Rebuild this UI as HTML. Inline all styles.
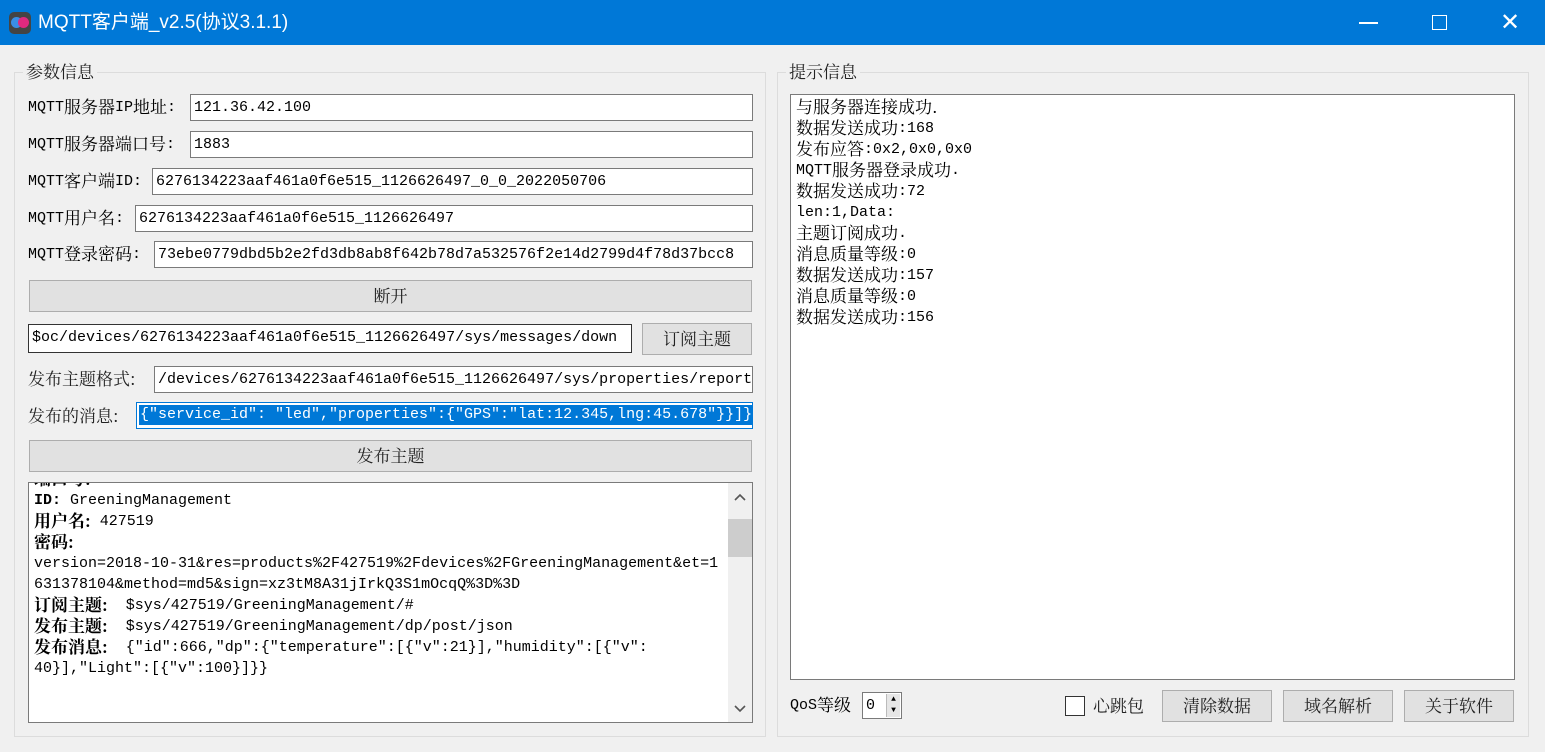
<!DOCTYPE html><html><head><meta charset="utf-8"><style>
*{box-sizing:border-box;margin:0;padding:0}
body{width:1545px;height:752px;background:#f0f0f0;position:relative;overflow:hidden;font-family:"Liberation Mono","Noto Serif CJK SC",monospace;font-size:15px;color:#000}
.a{position:absolute;white-space:pre;line-height:20px}
.c{font-family:"Noto Serif CJK SC","Noto Sans CJK SC",serif;font-size:17px;line-height:12px;position:relative;top:2px}
.cj{font-family:"Noto Serif CJK SC","Noto Sans CJK SC",serif;font-size:17px;line-height:20px}
.in{position:absolute;background:#fff;border:1px solid #7a7a7a;height:27px;padding:3px 0 0 3px;white-space:pre;overflow:hidden;line-height:20px}
.bt{position:absolute;background:#e1e1e1;border:1px solid #adadad;text-align:center;line-height:28px;font-family:"Noto Serif CJK SC",serif;font-size:17px;color:#222}
.gb{position:absolute;border:1px solid #dcdcdc}
.gt{position:absolute;background:#f0f0f0;padding:0 3px;font-family:"Noto Serif CJK SC",serif;font-size:17px;color:#222;line-height:20px}
</style></head><body>
<div style="position:absolute;left:0;top:0;width:1545px;height:45px;background:#0078d7"></div>
<div style="position:absolute;left:9px;top:12px;width:22px;height:22px;border-radius:5px;background:#444"></div>
<div style="position:absolute;left:11px;top:17px;width:11px;height:11px;border-radius:50%;background:#3a8ee6"></div>
<div style="position:absolute;left:18px;top:17px;width:11px;height:11px;border-radius:50%;background:#e0297f"></div>
<div class="a" style="left:38px;top:11px;color:#fff;font-family:'Liberation Sans','Noto Sans CJK SC',sans-serif;font-size:19px;line-height:24px">MQTT客户端_v2.5(协议3.1.1)</div>
<div style="position:absolute;left:1359px;top:22px;width:19px;height:1.5px;background:#fff"></div>
<div style="position:absolute;left:1432px;top:15px;width:15px;height:15px;border:1.5px solid #fff"></div>
<div class="a" style="left:1500px;top:9px;color:#fff;font-family:'Liberation Sans';font-size:24px;line-height:28px">✕</div>

<div class="gb" style="left:14px;top:72px;width:752px;height:665px"></div>
<div class="gt" style="left:23px;top:61px">参数信息</div>
<div class="gb" style="left:777px;top:72px;width:752px;height:665px"></div>
<div class="gt" style="left:786px;top:61px">提示信息</div>

<div class="a" style="left:28px;top:98px">MQTT<span class="c">服务器</span>IP<span class="c">地址</span>:</div>
<div class="in" style="left:190px;top:94px;width:563px">121.36.42.100</div>
<div class="a" style="left:28px;top:135px">MQTT<span class="c">服务器端口号</span>:</div>
<div class="in" style="left:190px;top:131px;width:563px">1883</div>
<div class="a" style="left:28px;top:172px">MQTT<span class="c">客户端</span>ID:</div>
<div class="in" style="left:152px;top:168px;width:601px">6276134223aaf461a0f6e515_1126626497_0_0_2022050706</div>
<div class="a" style="left:28px;top:209px">MQTT<span class="c">用户名</span>:</div>
<div class="in" style="left:135px;top:205px;width:618px">6276134223aaf461a0f6e515_1126626497</div>
<div class="a" style="left:28px;top:245px">MQTT<span class="c">登录密码</span>:</div>
<div class="in" style="left:154px;top:241px;width:599px">73ebe0779dbd5b2e2fd3db8ab8f642b78d7a532576f2e14d2799d4f78d37bcc8</div>
<div class="bt" style="left:29px;top:280px;width:723px;height:32px">断开</div>
<div class="in" style="left:28px;top:324px;width:604px;height:29px;border-color:#333">$oc/devices/6276134223aaf461a0f6e515_1126626497/sys/messages/down</div>
<div class="bt" style="left:642px;top:323px;width:110px;height:32px">订阅主题</div>
<div class="a cj" style="left:28px;top:368px;color:#222">发布主题格式:</div>
<div class="in" style="left:154px;top:366px;width:599px">/devices/6276134223aaf461a0f6e515_1126626497/sys/properties/report</div>
<div class="a cj" style="left:28px;top:405px;color:#222">发布的消息:</div>
<div class="in" style="left:136px;top:402px;width:617px;border-color:#0078d7;padding:2px 0 0 2px"><span style="background:#0078d7;color:#fff;display:inline-block;padding-left:1px">{"service_id": "led","properties":{"GPS":"lat:12.345,lng:45.678"}}]}</span></div>
<div class="bt" style="left:29px;top:440px;width:723px;height:32px">发布主题</div>

<div style="position:absolute;left:28px;top:482px;width:725px;height:241px;background:#fff;border:1px solid #7a7a7a;overflow:hidden">
<div class="a" style="left:5px;top:-14px;line-height:21px;font-size:15px"><b class="c">端口号:</b> 1883
<b>ID:</b> GreeningManagement
<b class="c">用户名:</b> 427519
<b class="c">密码:</b>
version=2018-10-31&amp;res=products%2F427519%2Fdevices%2FGreeningManagement&amp;et=1
631378104&amp;method=md5&amp;sign=xz3tM8A31jIrkQ3S1mOcqQ%3D%3D
<b class="c">订阅主题:</b>  $sys/427519/GreeningManagement/#
<b class="c">发布主题:</b>  $sys/427519/GreeningManagement/dp/post/json
<b class="c">发布消息:</b>  {"id":666,"dp":{"temperature":[{"v":21}],"humidity":[{"v":
40}],"Light":[{"v":100}]}}


<span style="color:#d00">    <span class="c">华为云</span>MQTT<span class="c">连接参数说明</span></span></div>
<div style="position:absolute;right:0;top:0;width:24px;height:239px;background:#f0f0f0"></div>
<div style="position:absolute;right:0;top:36px;width:24px;height:38px;background:#cdcdcd"></div>
<svg style="position:absolute;right:6px;top:10px" width="12" height="8"><path d="M1 7 L6 2 L11 7" stroke="#555" stroke-width="1.6" fill="none"/></svg>
<svg style="position:absolute;right:6px;top:222px" width="12" height="8"><path d="M1 1 L6 6 L11 1" stroke="#555" stroke-width="1.6" fill="none"/></svg>
</div>

<div style="position:absolute;left:790px;top:94px;width:725px;height:586px;background:#fff;border:1px solid #7a7a7a">
<div class="a" style="left:5px;top:2px;line-height:21px"><span class="c">与服务器连接成功.</span>
<span class="c">数据发送成功</span>:168
<span class="c">发布应答</span>:0x2,0x0,0x0
MQTT<span class="c">服务器登录成功</span>.
<span class="c">数据发送成功</span>:72
len:1,Data:
<span class="c">主题订阅成功</span>.
<span class="c">消息质量等级</span>:0
<span class="c">数据发送成功</span>:157
<span class="c">消息质量等级</span>:0
<span class="c">数据发送成功</span>:156</div></div>

<div class="a" style="left:790px;top:696px">QoS<span class="c">等级</span></div>
<div style="position:absolute;left:862px;top:692px;width:40px;height:27px;background:#fff;border:1px solid #7a7a7a"><div class="a" style="left:3px;top:3px">0</div>
<div style="position:absolute;right:1px;top:1px;width:14px;height:23px;background:#e6e6e6;border-left:1px solid #bbb;font-size:8px;line-height:11px;text-align:center">▲<br>▼</div></div>
<div style="position:absolute;left:1065px;top:696px;width:20px;height:20px;background:#fff;border:1px solid #333"></div>
<div class="a cj" style="left:1093px;top:695px;color:#222">心跳包</div>
<div class="bt" style="left:1162px;top:690px;width:110px;height:32px">清除数据</div>
<div class="bt" style="left:1283px;top:690px;width:110px;height:32px">域名解析</div>
<div class="bt" style="left:1404px;top:690px;width:110px;height:32px">关于软件</div>
</body></html>
